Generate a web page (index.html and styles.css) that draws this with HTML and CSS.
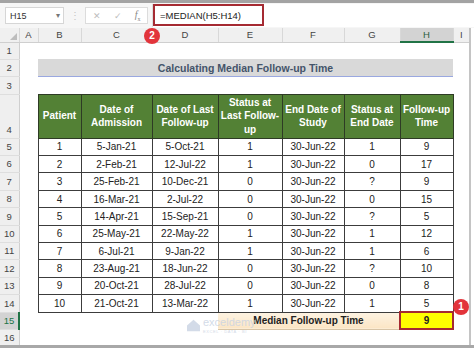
FILE: index.html
```html
<!DOCTYPE html>
<html lang="en">
<head>
  <meta charset="UTF-8">
  <title>Median Follow-up Time</title>
  <link rel="stylesheet" href="styles.css">
</head>
<body>
  <div class="app">
    <!-- formula bar -->
    <div class="fbar">
      <div class="namebox"><span>H15</span><span class="caret">&#9662;</span></div>
      <div class="dots">&#8942;</div>
      <div class="btns">
        <span>&#10005;</span>
        <span>&#10003;</span>
        <span class="fx"><i>f</i><sub>x</sub></span>
      </div>
      <div class="formula">
        <span class="hl">=MEDIAN(H5:H14)</span>
      </div>
    </div>

    <table class="sheet">
      <colgroup>
        <col class="c-rh"><col class="c-a"><col class="c-b"><col class="c-c"><col class="c-d">
        <col class="c-e"><col class="c-f"><col class="c-g"><col class="c-h"><col class="c-i">
      </colgroup>
      <tr class="colhdr">
        <th class="corner"><span class="tri"></span></th>
        <th>A</th><th>B</th><th>C</th><th>D</th><th>E</th><th>F</th><th>G</th><th class="sel">H</th><th>I</th>
      </tr>
      <tr class="r"><th class="rh">1</th><td colspan="9"></td></tr>
      <tr class="r"><th class="rh">2</th><td></td><td colspan="7" class="title">Calculating Median Follow-up Time</td><td></td></tr>
      <tr class="r"><th class="rh">3</th><td colspan="9"></td></tr>
      <tr class="r4">
        <th class="rh">4</th><td></td>
        <td class="hd">Patient</td>
        <td class="hd">Date of<br>Admission</td>
        <td class="hd">Date of Last<br>Follow-up</td>
        <td class="hd">Status at<br>Last Follow-<br>up</td>
        <td class="hd">End Date of<br>Study</td>
        <td class="hd">Status at<br>End Date</td>
        <td class="hd">Follow-up<br>Time</td>
        <td></td>
      </tr>
      <tr class="r"><th class="rh">5</th><td></td><td class="d">1</td><td class="d">5-Jan-21</td><td class="d">5-Oct-21</td><td class="d">1</td><td class="d">30-Jun-22</td><td class="d">1</td><td class="d">9</td><td></td></tr>
      <tr class="r"><th class="rh">6</th><td></td><td class="d">2</td><td class="d">2-Feb-21</td><td class="d">12-Jul-22</td><td class="d">1</td><td class="d">30-Jun-22</td><td class="d">0</td><td class="d">17</td><td></td></tr>
      <tr class="r"><th class="rh">7</th><td></td><td class="d">3</td><td class="d">25-Feb-21</td><td class="d">10-Dec-21</td><td class="d">0</td><td class="d">30-Jun-22</td><td class="d">?</td><td class="d">9</td><td></td></tr>
      <tr class="r"><th class="rh">8</th><td></td><td class="d">4</td><td class="d">16-Mar-21</td><td class="d">2-Jul-22</td><td class="d">0</td><td class="d">30-Jun-22</td><td class="d">0</td><td class="d">15</td><td></td></tr>
      <tr class="r"><th class="rh">9</th><td></td><td class="d">5</td><td class="d">14-Apr-21</td><td class="d">15-Sep-21</td><td class="d">0</td><td class="d">30-Jun-22</td><td class="d">?</td><td class="d">5</td><td></td></tr>
      <tr class="r"><th class="rh">10</th><td></td><td class="d">6</td><td class="d">25-May-21</td><td class="d">22-May-22</td><td class="d">1</td><td class="d">30-Jun-22</td><td class="d">1</td><td class="d">12</td><td></td></tr>
      <tr class="r"><th class="rh">11</th><td></td><td class="d">7</td><td class="d">6-Jul-21</td><td class="d">9-Jan-22</td><td class="d">1</td><td class="d">30-Jun-22</td><td class="d">1</td><td class="d">6</td><td></td></tr>
      <tr class="r"><th class="rh">12</th><td></td><td class="d">8</td><td class="d">23-Aug-21</td><td class="d">18-Jun-22</td><td class="d">0</td><td class="d">30-Jun-22</td><td class="d">?</td><td class="d">10</td><td></td></tr>
      <tr class="r"><th class="rh">13</th><td></td><td class="d">9</td><td class="d">20-Oct-21</td><td class="d">28-Jul-22</td><td class="d">0</td><td class="d">30-Jun-22</td><td class="d">0</td><td class="d">8</td><td></td></tr>
      <tr class="r"><th class="rh">14</th><td></td><td class="d">10</td><td class="d">21-Oct-21</td><td class="d">13-Mar-22</td><td class="d">1</td><td class="d">30-Jun-22</td><td class="d">1</td><td class="d">5</td><td></td></tr>
      <tr class="r"><th class="rh sel">15</th><td colspan="4"></td><td colspan="3" class="mlabel">Median Follow-up Time</td><td class="mval">9</td><td></td></tr>
      <tr class="r"><th class="rh">16</th><td colspan="9"></td></tr>
    </table>

    <!-- watermark -->
    <div class="wm">
      <svg width="15" height="13" viewBox="0 0 18 16"><path d="M1 8 L9 1 L17 8 L17 15 L1 15 Z" fill="#c9d3e3"/></svg>
      <div class="wm-txt"><span>exceldemy</span><small>EXCEL &middot; DATA &middot; BI</small></div>
    </div>

    <span class="badge b1">1</span>
    <span class="badge b2">2</span>
  </div>
</body>
</html>
```

FILE: styles.css
```css
*{
  margin: 0;
  padding: 0;
  box-sizing: border-box;
}
body{
  background: #fff;
  font-family: "Liberation Sans", Arial, sans-serif;
  color: #222;
}
.app{
  position: relative;
  width: 474px;
  height: 348px;
  overflow: hidden;
  border-top: 3px solid #a3a3a3;
  border-bottom: 3px solid #a8a8a8;
}

/* formula bar */
.fbar{
  height: 25px;
  background: #f6f6f6;
  display: flex;
  align-items: center;
  padding-left: 5px;
}
.namebox{
  width: 59px;
  height: 17px;
  background: #fff;
  border: 1px solid #d6d6d6;
  display: flex;
  align-items: center;
  justify-content: space-between;
  padding: 0 3px 0 4px;
  font-size: 9px;
  color: #333;
}
.caret{
  font-size: 8px;
  color: #777;
}
.dots{
  width: 21px;
  text-align: center;
  color: #c4c4c4;
  font-size: 10px;
}
.btns{
  width: 63px;
  height: 17px;
  background: #fff;
  border: 1px solid #dcdcdc;
  display: flex;
  align-items: center;
  justify-content: space-around;
  font-size: 9px;
  color: #bdbdbd;
}
.btns .fx{
  color: #888;
  font-family: "Liberation Serif", serif;
  font-size: 10px;
}
.btns .fx sub{
  font-size: 6px;
}
.formula{
  margin-left: 4px;
  flex: 1;
  height: 23px;
  background: #fff;
  border-left: 1px solid #dcdcdc;
  align-self: flex-start;
  margin-top: 1px;
}
.formula .hl{
  display: flex;
  align-items: center;
  width: 111px;
  height: 22px;
  border: 2px solid #a52a32;
  padding-left: 5px;
  font-size: 9.5px;
  color: #222;
}

/* sheet grid */
.sheet{
  border-collapse: collapse;
  table-layout: fixed;
  width: 470px;
  border-right: 2px solid #c4c4c4;
}
.c-rh{ width: 19px; }
.c-a{ width: 19px; }
.c-b{ width: 43px; }
.c-c{ width: 71px; }
.c-d{ width: 66px; }
.c-e{ width: 64px; }
.c-f{ width: 62px; }
.c-g{ width: 56px; }
.c-h{ width: 53px; }
.c-i{ width: 17px; }

.colhdr th{
  height: 14px;
  background: #f0f0f0;
  border-right: 1px solid #d8d8d8;
  border-bottom: 1px solid #cfcfcf;
  font-weight: normal;
  font-size: 9.5px;
  color: #444;
}
.colhdr th.sel{
  background: #d3d3d3;
  border-bottom: 2px solid #217346;
  color: #2b5d3f;
}
.corner{
  position: relative;
}
.tri{
  position: absolute;
  right: 2px;
  bottom: 2px;
  width: 0;
  height: 0;
  border-left: 7px solid transparent;
  border-bottom: 7px solid #bdbdbd;
}
.r{ height: 17.4px; }
.r4{ height: 44px; }
.rh{
  background: #efefef;
  border-right: 1px solid #cfcfcf;
  border-bottom: 1px solid #dedede;
  font-weight: normal;
  font-size: 9.5px;
  color: #444;
  vertical-align: bottom;
  padding-bottom: 3px;
}
.rh.sel{
  background: #d3d3d3;
  color: #217346;
  border-right: 2px solid #217346;
}
td{
  font-size: 10px;
  text-align: center;
  padding: 0;
}
.title{
  background: #d9d9d9;
  border-bottom: 1px solid #9aa8e0;
  color: #44546a;
  font-weight: bold;
  font-size: 10.5px;
}
.hd{
  background: #538135;
  color: #fff;
  font-weight: bold;
  line-height: 13.5px;
  border: 1px solid #2e3b25;
}
.d{
  border: 1px solid #3c3c3c;
  color: #222;
}
.mlabel{
  background: linear-gradient(#fdf3e2, #fbe5c4);
  border-bottom: 1px solid #d7c4a6;
  font-weight: bold;
  font-size: 10px;
  color: #222;
}
.mval{
  background: #ffff00;
  border: 2px solid #a52a32;
  font-weight: bold;
}

/* watermark */
.wm{
  position: absolute;
  left: 186px;
  top: 314px;
  display: flex;
  align-items: flex-start;
  gap: 2px;
  opacity: 0.8;
}
.wm svg{
  margin-top: 2px;
}
.wm-txt{
  display: flex;
  flex-direction: column;
  line-height: 1;
}
.wm-txt span{
  font-size: 11px;
  color: #c9d3e3;
}
.wm-txt small{
  font-size: 4px;
  color: #c9d3e3;
  letter-spacing: 0.6px;
  margin-top: 2px;
}

/* annotation badges */
.badge{
  position: absolute;
  width: 16px;
  height: 16px;
  border-radius: 50%;
  background: #e2343b;
  color: #fff;
  font-size: 10px;
  font-weight: bold;
  text-align: center;
  line-height: 16px;
}
.b1{
  left: 453px;
  top: 296px;
}
.b2{
  left: 144px;
  top: 25px;
}
```
